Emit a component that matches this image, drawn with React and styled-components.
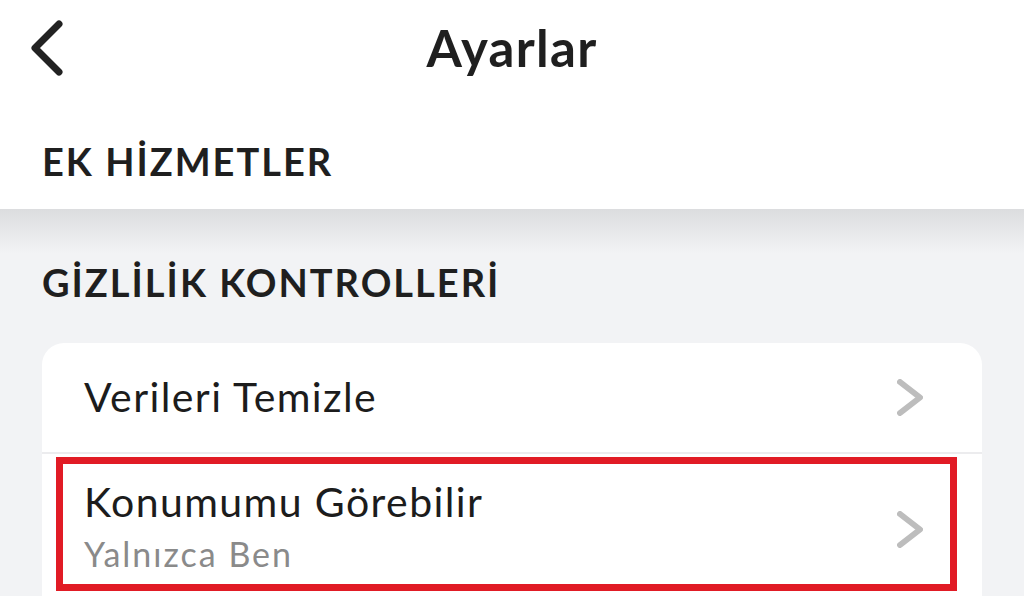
import React from "react";
import styled, { createGlobalStyle } from "styled-components";

const Global = createGlobalStyle`
  html, body { margin: 0; padding: 0; }
  body {
    background: #f2f3f5;
    font-family: "Lato", "Noto Sans", sans-serif;
    color: #1e1e1e;
    width: 1024px;
    height: 596px;
    overflow: hidden;
  }
`;

const Page = styled.div`
  width: 1024px;
  height: 596px;
  display: flex;
  flex-direction: column;
  background: #f2f3f5;
  overflow: hidden;
`;

const Header = styled.header`
  position: relative;
  flex-shrink: 0;
  background: #fff;
  height: 209px;
  display: flex;
  flex-direction: column;
  &::after {
    content: "";
    position: absolute;
    left: 0;
    right: 0;
    top: 100%;
    height: 44px;
    background: linear-gradient(#dcdddf, rgba(242, 243, 245, 0));
  }
`;

const TopBar = styled.div`
  position: relative;
  height: 96px;
  display: flex;
  align-items: center;
  justify-content: center;
`;

const BackButton = styled.button`
  position: absolute;
  left: 27px;
  top: 18px;
  width: 40px;
  height: 60px;
  border: 0;
  padding: 0;
  background: none;
  display: flex;
  align-items: center;
  justify-content: center;
`;

const Title = styled.h1`
  margin: 0;
  margin-top: -2px;
  font-size: 51px;
  font-weight: 700;
  color: #1f1f1f;
  letter-spacing: 1.3px;
`;

const SectionTitle = styled.h2`
  margin: 0;
  padding-left: 42px;
  font-size: 38px;
  font-weight: 700;
  color: #1f1f1f;
  letter-spacing: 2px;
  line-height: 1;
  margin-top: ${(p) => p.$top}px;
`;

const Body = styled.main`
  position: relative;
  z-index: 1;
  display: flex;
  flex-direction: column;
`;

const Card = styled.section`
  margin: 42px 42px 0;
  background: #fff;
  border-radius: 22px 22px 0 0;
  display: flex;
  flex-direction: column;
`;

const Row = styled.div`
  position: relative;
  flex-shrink: 0;
  display: flex;
  align-items: center;
  justify-content: space-between;
  height: ${(p) => p.$h}px;
  padding: 0 59px 0 42px;
  border-bottom: ${(p) => (p.$divider ? "2px solid #ececee" : "none")};
  box-sizing: border-box;
`;

const Texts = styled.div`
  align-self: flex-start;
  padding-top: 24px;
  display: flex;
  flex-direction: column;
  gap: 8px;
`;

const Label = styled.div`
  font-size: 41px;
  font-weight: 400;
  color: #1c1c1c;
  line-height: 48px;
  letter-spacing: 1.4px;
  margin-top: ${(p) => p.$shift || 0}px;
`;

const Sub = styled.div`
  font-size: 34px;
  font-weight: 400;
  color: #8a8a8a;
  line-height: 40px;
  letter-spacing: 2px;
`;

const Highlight = styled.div`
  position: absolute;
  left: 14px;
  top: 3px;
  width: 901px;
  height: 134px;
  border: 7px solid #e11b25;
  box-sizing: border-box;
  pointer-events: none;
`;

const Chevron = ({ color = "#bdbdbd", w = 20, h = 31, sw = 6 }) => (
  <svg width={w + sw} height={h + sw} viewBox={`0 0 ${w + sw} ${h + sw}`}>
    <polyline
      points={`${sw / 2},${sw / 2} ${w + sw / 2},${h / 2 + sw / 2} ${sw / 2},${h + sw / 2}`}
      fill="none"
      stroke={color}
      strokeWidth={sw}
      strokeLinecap="round"
      strokeLinejoin="round"
    />
  </svg>
);

const BackIcon = () => (
  <svg width="38" height="58" viewBox="0 0 38 58">
    <polyline
      points="31,5 7,29 31,53"
      fill="none"
      stroke="#222"
      strokeWidth="7"
      strokeLinecap="round"
      strokeLinejoin="round"
    />
  </svg>
);

export default function App() {
  return (
    <>
      <Global />
      <Page>
        <Header>
          <TopBar>
            <BackButton aria-label="Geri">
              <BackIcon />
            </BackButton>
            <Title>Ayarlar</Title>
          </TopBar>
          <SectionTitle $top={46}>EK HİZMETLER</SectionTitle>
        </Header>
        <Body>
          <SectionTitle $top={54}>GİZLİLİK KONTROLLERİ</SectionTitle>
          <Card>
            <Row $h={111} $divider>
              <Label $shift={-2}>Verileri Temizle</Label>
              <Chevron />
            </Row>
            <Row $h={150}>
              <Texts>
                <Label>Konumumu Görebilir</Label>
                <Sub>Yalnızca Ben</Sub>
              </Texts>
              <Chevron />
              <Highlight />
            </Row>
          </Card>
        </Body>
      </Page>
    </>
  );
}
